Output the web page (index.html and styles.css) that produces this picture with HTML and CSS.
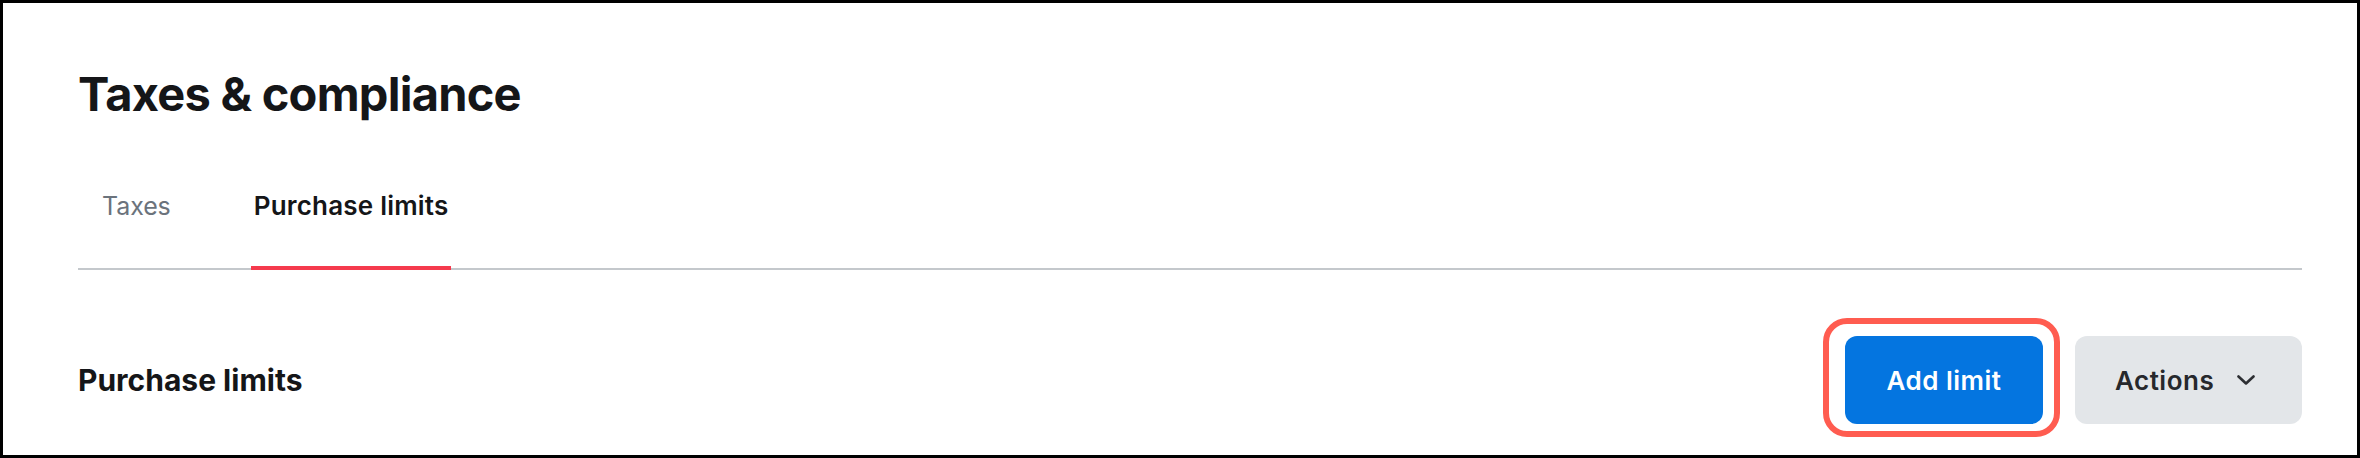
FILE: index.html
```
<!DOCTYPE html>
<html lang="en">
<head>
<meta charset="utf-8">
<title>Taxes &amp; compliance</title>
<link rel="stylesheet" href="styles.css">
</head>
<body>
<div class="frame">
  <h1 class="title">Taxes &amp; compliance</h1>
  <nav class="tabs">
    <a class="tab">Taxes</a>
    <a class="tab active">Purchase limits</a>
  </nav>
  <section class="section-row">
    <h2 class="section-title">Purchase limits</h2>
    <div class="actions">
      <div class="highlight-wrap">
        <button class="btn btn-primary">Add limit</button>
        <span class="highlight"></span>
      </div>
      <button class="btn btn-secondary">Actions
        <svg class="chev" width="18" height="10" viewBox="0 0 18 10" aria-hidden="true"><path d="M1.5 1.5 L9 8.5 L16.5 1.5" fill="none" stroke="#2d2f33" stroke-width="2.6" stroke-linecap="round" stroke-linejoin="round"/></svg>
      </button>
    </div>
  </section>
</div>
</body>
</html>
```
FILE: styles.css
```
* { box-sizing: border-box; }
html, body { margin: 0; padding: 0; background: #fff; }
body { font-family: Inter, "Noto Sans", "Liberation Sans", sans-serif; color: #1a1b1e; }

.frame {
  width: 2360px;
  height: 458px;
  border: 3px solid #000;
  padding: 62px 55px 0 75px;
  display: flex;
  flex-direction: column;
  overflow: hidden;
}

.title {
  margin: 0 0 67px 0;
  font-size: 47px;
  line-height: 58px;
  font-weight: 700;
  letter-spacing: -0.75px;
  color: #151618;
}

.tabs {
  display: flex;
  gap: 77px;
  padding-left: 21px;
  border-bottom: 2px solid #c4c8cc;
}

.tab {
  display: block;
  padding: 0 3px 44px;
  margin-bottom: -2px;
  border-bottom: 4px solid transparent;
  font-size: 25px;
  line-height: 32px;
  font-weight: 400;
  color: #6b737c;
  letter-spacing: -0.1px;
}

.tab.active {
  color: #151618;
  font-size: 26px;
  font-weight: 600;
  letter-spacing: 0.2px;
  border-bottom-color: #f53a4d;
}

.section-row {
  margin-top: 66px;
  display: flex;
  align-items: center;
  justify-content: space-between;
  height: 88px;
}

.section-title {
  margin: 0;
  font-size: 30px;
  line-height: 36px;
  font-weight: 700;
  color: #151618;
}

.actions {
  display: flex;
  gap: 32px;
  align-items: center;
}

.highlight-wrap {
  position: relative;
  display: flex;
}

.highlight {
  position: absolute;
  left: -22px;
  right: -17px;
  top: -18px;
  bottom: -13px;
  border: 6px solid #ff5c50;
  border-radius: 24px;
  pointer-events: none;
}

.btn {
  height: 88px;
  border: 0;
  border-radius: 12px;
  font-family: inherit;
  font-size: 26px;
  font-weight: 600;
  letter-spacing: 0.5px;
  display: flex;
  align-items: center;
  justify-content: center;
}

.btn-primary {
  width: 198px;
  background: #0475e0;
  color: #fff;
}

.btn-secondary {
  width: 227px;
  padding: 0 47px 0 40px;
  justify-content: space-between;
  background: #e3e6e9;
  color: #26282c;
}

.chev { display: block; }
```
